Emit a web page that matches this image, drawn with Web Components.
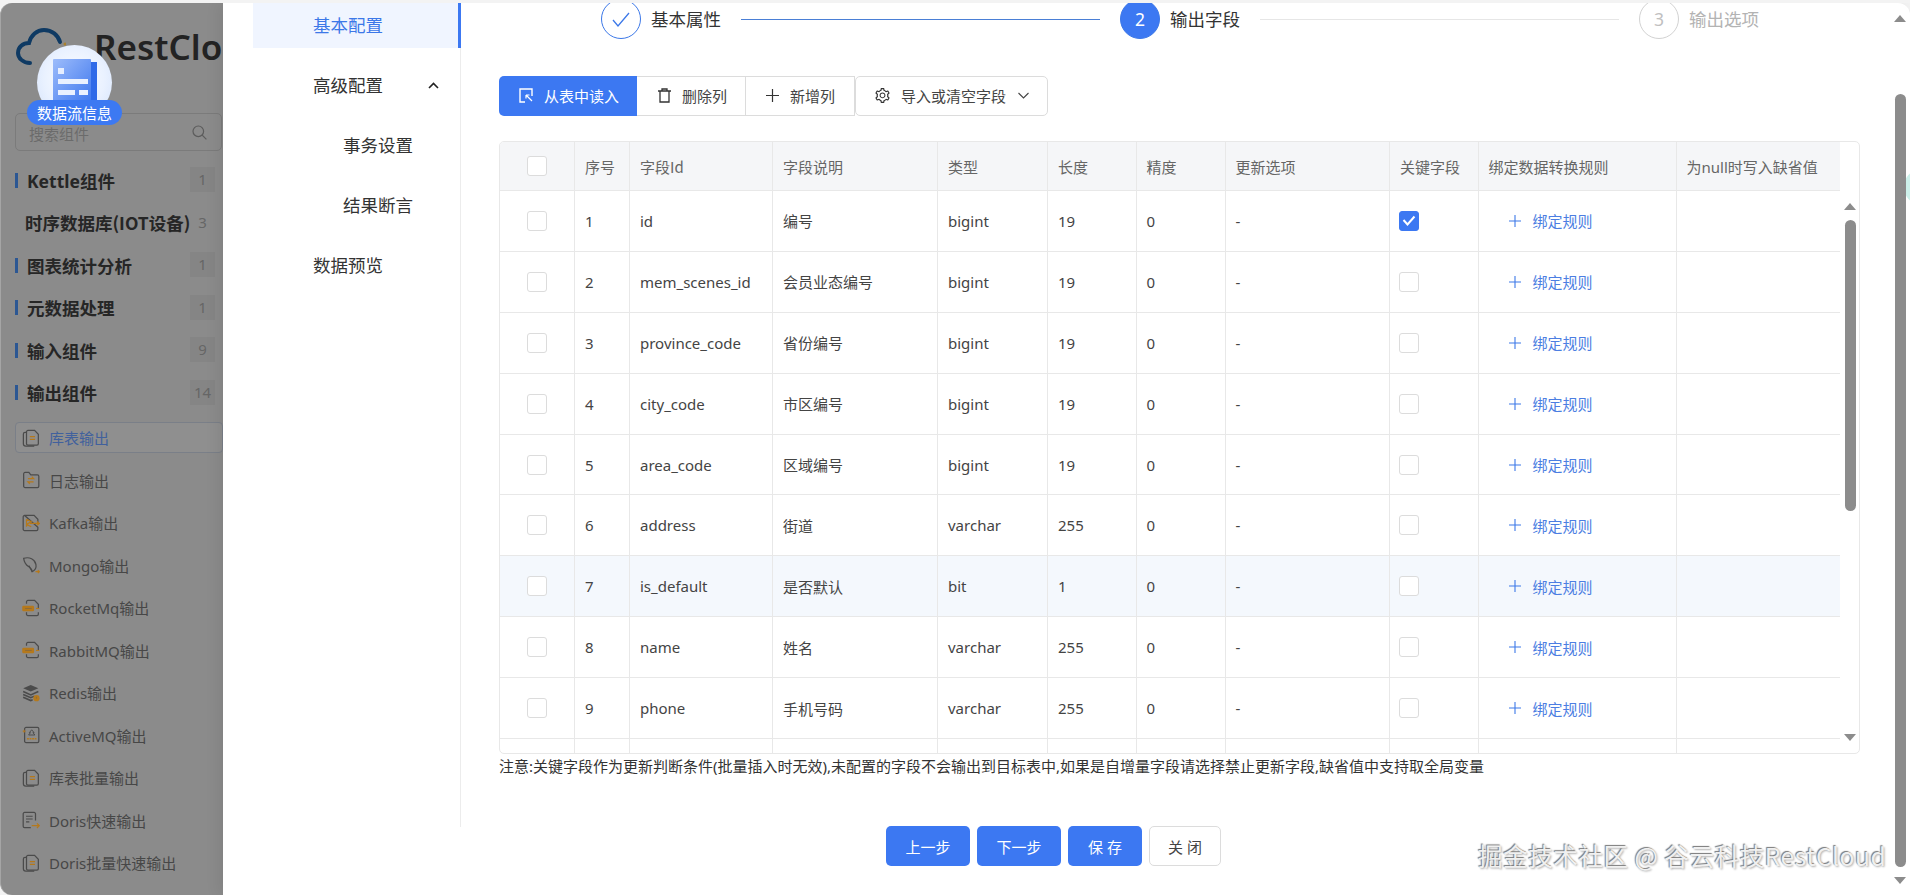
<!DOCTYPE html>
<html lang="zh">
<head>
<meta charset="utf-8">
<title>RestCloud</title>
<style>
  html, body { margin: 0; height: 895px; overflow: hidden; background: #f3f3f3; }
  body { font-family: "Noto Sans", "Noto Sans CJK SC", sans-serif; }
</style>
</head>
<body>
<rc-app>
  <rc-sidebar slot="side">
    <rc-group count="1" bar>Kettle组件</rc-group>
    <rc-group count="3" plain>时序数据库(IOT设备)</rc-group>
    <rc-group count="1" bar>图表统计分析</rc-group>
    <rc-group count="1" bar>元数据处理</rc-group>
    <rc-group count="9" bar>输入组件</rc-group>
    <rc-group count="14" bar>输出组件</rc-group>
    <rc-item icon="stack" active>库表输出</rc-item>
    <rc-item icon="folder">日志输出</rc-item>
    <rc-item icon="kafka">Kafka输出</rc-item>
    <rc-item icon="leaf">Mongo输出</rc-item>
    <rc-item icon="rocket">RocketMq输出</rc-item>
    <rc-item icon="rocket">RabbitMQ输出</rc-item>
    <rc-item icon="redis">Redis输出</rc-item>
    <rc-item icon="active">ActiveMQ输出</rc-item>
    <rc-item icon="stack">库表批量输出</rc-item>
    <rc-item icon="doc">Doris快速输出</rc-item>
    <rc-item icon="stack">Doris批量快速输出</rc-item>
  </rc-sidebar>
  <rc-flow-node slot="side"></rc-flow-node>
  <rc-config-menu slot="panel"></rc-config-menu>
  <rc-main slot="panel">
    <rc-steps></rc-steps>
    <rc-toolbar></rc-toolbar>
    <rc-field-table></rc-field-table>
    <rc-form-footer></rc-form-footer>
  </rc-main>
</rc-app>

<script>
const define = (name, html) => {
  customElements.define(name, class extends HTMLElement {
    constructor() {
      super();
      this.attachShadow({ mode: "open" });
      this.shadowRoot.innerHTML = typeof html === "function" ? html(this) : html;
    }
  });
};

define("rc-app", `
  <style>
    :host { display: flex; height: 892px; margin-top: 3px; position: relative; overflow: hidden; }
    #side { display: block; width: 223px; flex: none; position: relative; }
    #panel {
      flex: 1; display: flex; background: #fff; position: relative; min-width: 0;
      border-radius: 0 12px 0 0; box-shadow: -5px 0 14px rgba(0, 0, 0, .07);
    }
    .mark {
      position: absolute; left: 1478px; top: 834px; white-space: nowrap; letter-spacing: .5px;
      font: 24.6px "Noto Sans CJK SC", "Noto Sans", sans-serif; color: #f0f0f0;
      text-shadow: -1px -1px 1px #777, 1px 1px 2px #b0b0b0;
    }
    .bar { position: absolute; background: #8c8c8c; }
    .arrow { position: absolute; width: 0; height: 0; border-left: 6.5px solid transparent; border-right: 6.5px solid transparent; }
    .teal { position: absolute; left: 1904px; top: 167px; width: 30px; height: 34px; border-radius: 50%; background: #cdf1eb; }
  </style>
  <slot id="side" name="side"></slot>
  <div id="panel"><slot name="panel"></slot></div>
  <div class="teal"></div>
  <div class="arrow" style="left:1894px;top:12px;border-bottom:7px solid #8c8c8c"></div>
  <div class="bar" style="left:1895px;top:91px;width:11px;height:773px;border-radius:6px"></div>
  <div class="arrow" style="left:1894px;top:874px;border-top:7px solid #8c8c8c"></div>
  <div class="arrow" style="left:1844px;top:200px;border-bottom:7px solid #8c8c8c"></div>
  <div class="bar" style="left:1845px;top:217px;width:11px;height:291px;border-radius:6px"></div>
  <div class="arrow" style="left:1844px;top:731px;border-top:7px solid #8c8c8c"></div>
  <div class="mark">掘金技术社区 @ 谷云科技RestCloud</div>
`);

define("rc-sidebar", `
  <style>
    :host {
      display: block; height: 892px; background: #8b8b8b; overflow: hidden; box-sizing: border-box;
      border-radius: 12px 0 0 12px; border-left: 1px solid #a5a5a5; padding: 25px 0 0 14px;
    }
    .logo { display: flex; align-items: center; gap: 4px; height: 37px; margin-left: 1px; white-space: nowrap; }
    .logo svg { flex: none; }
    .logo b { font: 600 35px/37px "Noto Sans", sans-serif; color: #232323; margin-left: 24px; }
    .search {
      box-sizing: border-box; display: flex; align-items: center; justify-content: space-between;
      width: 207px; height: 38px; margin: 48px 0 8px; padding: 0 14px 0 13px;
      border: 1px solid #7b7b7b; border-radius: 5px; color: #6b6b6b; font-size: 15px;
    }
    .search span { padding-top: 3px; }
    .search svg { flex: none; }
    .list { display: block; }
  </style>
  <div class="logo">
    <svg width="50" height="38" viewBox="0 0 50 38" fill="none" stroke="#0f3a63" stroke-width="4" stroke-linecap="round">
      <path d="M14 35C7 35 2 30 2 25c0-6 5-10 11-10C15 7 21 2 28 2c8 0 14 5 16 12"/>
      <circle cx="49" cy="16" r="1.5" fill="#a9812e" stroke="none"/>
    </svg>
    <b>RestCloud</b>
  </div>
  <div class="search">
    <span>搜索组件</span>
    <svg width="15" height="15" viewBox="0 0 15 15" fill="none" stroke="#5c5c5c" stroke-width="1.2"><circle cx="6.3" cy="6.3" r="5.3"/><path d="M10.2 10.2l4.2 4.2"/></svg>
  </div>
  <slot class="list"></slot>
`);

define("rc-flow-node", `
  <style>
    :host {
      position: absolute; left: 27px; top: 42px; width: 95px; display: flex; flex-direction: column; align-items: center;
    }
    .disc {
      width: 75px; height: 75px; border-radius: 50%; overflow: hidden; display: flex; justify-content: center; align-items: flex-start;
      background: radial-gradient(circle at 50% 45%, #fff 0%, #e9f1ff 55%, #cfdffb 100%);
    }
    .pill {
      margin-top: -20px; height: 25px; width: 95px; border-radius: 13px; background: #3c79f2; color: #fff; position: relative;
      font: 15px/25px "Noto Sans CJK SC", sans-serif; text-align: center;
    }
  </style>
  <div class="disc">
    <svg width="46" height="48" viewBox="0 0 46 48" style="margin-top:14px">
      <defs><linearGradient id="g" x1="0" y1="0" x2="1" y2="1"><stop offset="0" stop-color="#9dbcfb"/><stop offset="1" stop-color="#3f78ee"/></linearGradient></defs>
      <rect x="1" y="0" width="38" height="44" rx="1" fill="url(#g)"/>
      <rect x="39" y="3" width="6" height="41" fill="#2f6ae8"/>
      <rect x="6" y="9" width="6" height="6" fill="#e6eeff"/>
      <rect x="6" y="20" width="30" height="5" fill="#eaf1ff"/>
      <rect x="6" y="31" width="17" height="5" fill="#eaf1ff"/>
      <rect x="27" y="31" width="9" height="5" fill="#eaf1ff"/>
    </svg>
  </div>
  <div class="pill">数据流信息</div>
`);

define("rc-group", (el) => `
  <style>
    :host { display: flex; align-items: center; height: 42.5px; position: relative; white-space: nowrap; }
    .tick { width: 2.5px; height: 15px; background: #2c5793; margin-right: 9.5px; flex: none; visibility: ${el.hasAttribute("bar") ? "visible" : "hidden"}; }
    .name { font-size: 17.5px; font-weight: 700; color: #262626; ${el.hasAttribute("plain") ? 'margin-left:-2px;font-family:"Noto Sans CJK SC",sans-serif;' : ""} }
    .count {
      position: absolute; left: 175px; top: 8px; width: 25px; height: 25px; line-height: 25px; text-align: center;
      font-size: 15px; color: #666; background: ${el.hasAttribute("plain") ? "transparent" : "#858585"};
    }
  </style>
  <span class="tick"></span><span class="name"><slot></slot></span>
  <span class="count">${el.getAttribute("count")}</span>
`);

const ORANGE = "#b5791c";
const DARK = "#4b4b4b";
const ITEM_ICONS = {
  stack: `<path d="M6 1.500h7l4 4v10a1.500 1.500 0 0 1-1.500 1.500H6A1.500 1.500 0 0 1 4.500 15.500V3A1.500 1.500 0 0 1 6 1.500z" fill="none" stroke="${DARK}" stroke-width="1.300"/><path d="M4.500 3.500H3A1.800 1.800 0 0 0 1.200 5.300v10.200A2.500 2.500 0 0 0 3.700 18h9" fill="none" stroke="${DARK}" stroke-width="1.300"/><path d="M8 8h5.500M8 11h5.500" stroke="${ORANGE}" stroke-width="1.400"/>`,
  folder: `<path d="M1.500 3A1.500 1.500 0 0 1 3 1.500h4l2 2.500h7A1.500 1.500 0 0 1 17.500 5.500v10.500A1.500 1.500 0 0 1 16 17.500H3A1.500 1.500 0 0 1 1.500 16z" fill="none" stroke="${DARK}" stroke-width="1.300"/><path d="M6 8h6l-2-2M12 11.500H6l2 2" fill="none" stroke="${ORANGE}" stroke-width="1.300"/>`,
  kafka: `<path d="M2.500 1.500h10l4 4v4M16.500 14v2A1.500 1.500 0 0 1 15 17.500H2.500A1.500 1.500 0 0 1 1 16V3A1.500 1.500 0 0 1 2.500 1.500z" fill="none" stroke="${DARK}" stroke-width="1.300"/><path d="M4.500 5.500l5 2.500-5 3M4.500 5.500v8M4.500 11l5 2.500M8 10h10M15.500 8l2.500 2-2.500 2" fill="none" stroke="${ORANGE}" stroke-width="1.300"/>`,
  leaf: `<path d="M1.500 2.500c6-2 12 1 13 6.500.5 3-1 6-4 7.500-.5-3-2-4-4-5.500C3.500 9 2 6 1.500 2.500z" fill="none" stroke="${DARK}" stroke-width="1.300"/><path d="M7 10l3.500 6.500" stroke="${DARK}" stroke-width="1.100"/><path d="M14 16.500h4M16.500 15l1.500 1.500-1.500 1.500" fill="none" stroke="${ORANGE}" stroke-width="1.200"/>`,
  rocket: `<path d="M4.500 5V3A1.500 1.500 0 0 1 6 1.500h7l4 4v4M17 14v2a1.500 1.500 0 0 1-1.500 1.500H6A1.500 1.500 0 0 1 4.500 16v-2" fill="none" stroke="${DARK}" stroke-width="1.300"/><rect x="0" y="7" width="12.500" height="6" rx="1.500" fill="${ORANGE}"/><path d="M3 10h7" stroke="#8b6a3a" stroke-width="1"/><path d="M14.500 10H18" stroke="${ORANGE}" stroke-width="1.200"/>`,
  redis: `<path d="M1 4.500L9 1l8 3.500L9 8z" fill="${DARK}"/><path d="M1 8l8 3.500L17 8M1 11l8 3.500 4-1.700M1 14l8 3.500 2-.8" fill="none" stroke="${DARK}" stroke-width="1.700"/><circle cx="15" cy="15" r="3.300" fill="${ORANGE}"/><path d="M15 13.500v2" stroke="#8b6a3a" stroke-width="1"/>`,
  active: `<rect x="2.500" y="1.500" width="15" height="16" rx="1.500" fill="none" stroke="${DARK}" stroke-width="1.300"/><path d="M10 4l2.500 3h-1.200l2 2.500H6.700l2-2.500H7.500z" fill="none" stroke="${DARK}" stroke-width="1"/><path d="M5 13.500h10" stroke="${ORANGE}" stroke-width="1.500" stroke-dasharray="2 .7"/><path d="M.5 5.500h3M2 4v3" stroke="${ORANGE}" stroke-width="1"/>`,
  doc: `<path d="M14 10V3A1.500 1.500 0 0 0 12.500 1.500H2.500A1.500 1.500 0 0 0 1 3v13a1.500 1.500 0 0 0 1.500 1.500H9" fill="none" stroke="${DARK}" stroke-width="1.300"/><path d="M4 5.500h7M4 8.500h7M4 11.500h3.500" stroke="${DARK}" stroke-width="1.100"/><path d="M10 15.500h8M15.500 13l2.500 2.500-2.500 2.500" fill="none" stroke="${ORANGE}" stroke-width="1.300"/>`
};

define("rc-item", (el) => {
  const active = el.hasAttribute("active");
  return `
  <style>
    :host { display: flex; align-items: center; height: 42.500px; white-space: nowrap; position: relative; ${active ? "margin-top:2.500px;" : ""} }
    .box { display: flex; align-items: center; height: 31px; box-sizing: border-box; width: 215px; padding-left: 7px; ${active ? "border:1px solid #7a7f88;border-radius:4px;background:#8f8f8f;padding-left:6px;" : ""} }
    svg { flex: none; margin-right: 9px; }
    span { font-size: 15px; color: ${active ? "#41619d" : "#474747"}; }
  </style>
  <div class="box">
    <svg width="18" height="18" viewBox="0 0 18.500 19">${ITEM_ICONS[el.getAttribute("icon")]}</svg>
    <span><slot></slot></span>
  </div>`;
});

define("rc-config-menu", `
  <style>
    :host {
      display: block; flex: none; width: 238px; height: 824px; box-sizing: border-box; border-right: 1px solid #ececec;
      padding-left: 30px; font-size: 17.500px; color: #333;
    }
    .row { display: flex; align-items: center; box-sizing: border-box; height: 45px; margin-bottom: 15px; padding: 0 0 2px 60px; position: relative; }
    .row.on { background: #f0f5ff; color: #3c78e8; margin-right: -1px; border-right: 3px solid #3c78f2; }
    .sub { padding-left: 90px; }
    svg { position: absolute; left: 175px; top: 19px; }
  </style>
  <div class="row on">基本配置</div>
  <div class="row">高级配置<svg width="11" height="7" viewBox="0 0 11 7" fill="none" stroke="#222" stroke-width="1.600"><path d="M1 6l4.500-4.500L10 6"/></svg></div>
  <div class="row sub">事务设置</div>
  <div class="row sub">结果断言</div>
  <div class="row">数据预览</div>
`);

define("rc-main", `
  <style>
    :host { display: block; flex: 1; min-width: 0; padding: 0 50px 0 38px; overflow: hidden; }
  </style>
  <slot></slot>
`);

define("rc-steps", `
  <style>
    :host { display: flex; height: 40px; margin: -4px 0 37px 102px; color: #333; font-size: 17.500px; }
    .step { display: flex; align-items: center; width: 519px; flex: none; box-sizing: border-box; padding-bottom: 2px; }
    .step:last-child { width: auto; }
    .dot { width: 40px; height: 40px; box-sizing: border-box; border-radius: 50%; flex: none; display: flex; align-items: center; justify-content: center; border: 1px solid #3c78e8; margin: 0 10px -2px 0; font-size: 17.500px; }
    .line { flex: 1; height: 1px; margin: 2px 20px 0; background: #4a7fd6; }
    .todo { color: #b3b3b3; }
    .todo .dot { border-color: #d2d2d2; color: #c0c0c0; }
  </style>
  <div class="step"><div class="dot"><svg width="18" height="15" viewBox="0 0 18 15" fill="none" stroke="#3c78e8" stroke-width="1.300"><path d="M1 8l5 6L17 1"/></svg></div>基本属性<div class="line"></div></div>
  <div class="step"><div class="dot" style="background:#3c78f2;color:#fff">2</div>输出字段<div class="line" style="background:#e6e6e6"></div></div>
  <div class="step todo"><div class="dot">3</div>输出选项</div>
`);

define("rc-toolbar", `
  <style>
    :host { display: flex; height: 40px; margin-bottom: 25px; font-size: 15px; color: #444; width: max-content; }
    .btn { display: flex; align-items: center; box-sizing: border-box; height: 40px; border: 1px solid #dcdcdc; border-left: none; white-space: nowrap; padding-bottom: 2px; }
    .btn svg { flex: none; }
    .read { width: 138px; background: #3c78f2; border: none; color: #fff; padding-left: 20px; gap: 11px; border-radius: 5px 0 0 5px; }
    .del { width: 109px; padding-left: 21px; gap: 11px; }
    .add { width: 109px; padding-left: 20px; gap: 11px; }
    .imp { width: 193px; padding-left: 19px; border-left: 1px solid #dcdcdc; border-radius: 5px; gap: 11px; }
  </style>
  <div class="btn read"><svg width="14" height="15" viewBox="0 0 14 15" fill="none" stroke="#fff" stroke-width="1.400"><path d="M6 14H1V1h12v7"/><path d="M7 7l6 6M7 7h3.500M7 7v3.500" stroke-width="1.200"/></svg>从表中读入</div>
  <div class="btn del"><svg width="13" height="15" viewBox="0 0 13 15" fill="none" stroke="#333" stroke-width="1.300"><path d="M0 3h13M4 3V1h5v2M2 3v11h9V3"/></svg>删除列</div>
  <div class="btn add"><svg width="13" height="13" viewBox="0 0 13 13" stroke="#333" stroke-width="1.200"><path d="M6.500 0v13M0 6.500h13"/></svg>新增列</div>
  <div class="btn imp"><svg width="15" height="15" viewBox="64 64 896 896" fill="#333"><path d="M924.8 625.7l-65.5-56c3.1-19 4.7-38.4 4.7-57.8s-1.6-38.800-4.700-57.800l65.500-56a32.030 32.030 0 0 0 9.300-35.200l-.9-2.600a443.740 443.740 0 0 0-79.700-137.900l-1.800-2.100a32.120 32.120 0 0 0-35.100-9.500l-81.300 28.900c-30-24.600-63.500-44-99.700-57.600l-15.700-85a32.050 32.050 0 0 0-25.800-25.700l-2.700-.5c-52.100-9.400-106.900-9.400-159 0l-2.700.5a32.050 32.050 0 0 0-25.800 25.700l-15.800 85.400a351.860 351.860 0 0 0-99 57.400l-81.900-29.100a32 32 0 0 0-35.100 9.500l-1.800 2.100a446.020 446.020 0 0 0-79.700 137.900l-.9 2.600c-4.500 12.500-.8 26.500 9.300 35.200l66.300 56.600c-3.100 18.800-4.600 38-4.600 57.100 0 19.200 1.500 38.400 4.600 57.100L99 625.500a32.030 32.030 0 0 0-9.300 35.200l.9 2.600c18.100 50.400 44.900 96.900 79.700 137.900l1.800 2.100a32.120 32.120 0 0 0 35.100 9.500l81.900-29.100c29.800 24.500 63.100 43.900 99 57.400l15.800 85.400a32.050 32.050 0 0 0 25.800 25.700l2.700.5a449.400 449.400 0 0 0 159 0l2.700-.5a32.050 32.050 0 0 0 25.800-25.700l15.700-85a350 350 0 0 0 99.700-57.600l81.300 28.900a32 32 0 0 0 35.100-9.500l1.800-2.100c34.800-41.100 61.600-87.500 79.700-137.900l.9-2.600c4.500-12.300.8-26.300-9.300-35zM788.300 465.900c2.500 15.100 3.800 30.600 3.800 46.100s-1.300 31-3.800 46.100l-6.600 40.100 74.700 63.900a370.030 370.030 0 0 1-42.600 73.600L721 702.800l-31.400 25.800c-23.900 19.600-50.500 35-79.300 45.800l-38.100 14.300-17.900 97a377.500 377.500 0 0 1-85 0l-17.900-97.200-37.800-14.500c-28.500-10.800-55-26.200-78.700-45.700l-31.400-25.900-93.400 33.200c-17-22.900-31.200-47.600-42.600-73.600l75.500-64.500-6.500-40c-2.400-14.900-3.700-30.300-3.700-45.500 0-15.300 1.200-30.600 3.700-45.500l6.500-40-75.500-64.500c11.300-26.100 25.600-50.700 42.600-73.600l93.400 33.200 31.400-25.900c23.700-19.500 50.200-34.900 78.700-45.700l37.900-14.300 17.900-97.200c28.100-3.200 56.800-3.200 85 0l17.900 97 38.100 14.300c28.700 10.800 55.400 26.200 79.300 45.800l31.400 25.800 92.800-32.900c17 22.900 31.200 47.600 42.600 73.600L781.800 426l6.500 39.900zM512 326c-97.200 0-176 78.800-176 176s78.800 176 176 176 176-78.800 176-176-78.800-176-176-176zm79.200 255.200A111.600 111.600 0 0 1 512 614c-29.900 0-58-11.700-79.200-32.800A111.600 111.600 0 0 1 400 502c0-29.900 11.700-58 32.800-79.200C454 401.600 482.100 390 512 390c29.900 0 58 11.600 79.200 32.800A111.600 111.600 0 0 1 624 502c0 29.900-11.700 58-32.800 79.200z"/></svg>导入或清空字段<svg width="11" height="7" viewBox="0 0 11 7" fill="none" stroke="#444" stroke-width="1.100" style="margin-left:1px"><path d="M.5 1l5 5 5-5"/></svg></div>
`);

const FIELDS = [
  ["id", "编号", "bigint", "19", true],
  ["mem_scenes_id", "会员业态编号", "bigint", "19"],
  ["province_code", "省份编号", "bigint", "19"],
  ["city_code", "市区编号", "bigint", "19"],
  ["area_code", "区域编号", "bigint", "19"],
  ["address", "街道", "varchar", "255"],
  ["is_default", "是否默认", "bit", "1"],
  ["name", "姓名", "varchar", "255"],
  ["phone", "手机号码", "varchar", "255"]
];
const CHECK_ON = `<svg width="14" height="11" viewBox="0 0 14 11" fill="none" stroke="#fff" stroke-width="2"><path d="M1.500 5l4 4.500 7-8"/></svg>`;
const fieldRow = (f, i) => `
  <div class="row${i === 6 ? " hover" : ""}">
    <div class="c mid"><i class="box"></i></div>
    <div class="c">${i + 1}</div><div class="c">${f[0]}</div><div class="c">${f[1]}</div><div class="c">${f[2]}</div>
    <div class="c">${f[3]}</div><div class="c">0</div><div class="c">-</div>
    <div class="c"><i class="box${f[4] ? " on" : ""}" style="margin-left:-1px">${f[4] ? CHECK_ON : ""}</i></div>
    <div class="c rule"><svg width="12" height="12" viewBox="0 0 12 12" stroke="#3c78e8" stroke-width="1.100"><path d="M6 0v12M0 6h12"/></svg>绑定规则</div>
    <div class="c last"></div>
  </div>`;

define("rc-field-table", `
  <style>
    :host {
      display: block; box-sizing: border-box; height: 613px; border: 1px solid #e8e8e8; border-radius: 5px; overflow: hidden;
      padding-right: 19px; font-size: 15px; color: #444;
    }
    .row { display: grid; grid-template-columns: 75px 55px 143px 165px 110px 88.500px 89px 164.500px 88.500px 198px 163.500px; height: 60.900px; }
    .head { height: 49px; background: #f5f6f8; color: #666; }
    .hover { background: #f4f8fd; }
    .c { display: flex; align-items: center; box-sizing: border-box; padding-left: 10px; border-right: 1px solid #e8e8e8; border-bottom: 1px solid #e8e8e8; white-space: nowrap; overflow: hidden; }
    .mid { justify-content: center; padding-left: 0; }
    .last { border-right: none; }
    .box { display: flex; align-items: center; justify-content: center; width: 20px; height: 20px; box-sizing: border-box; border: 1px solid #dcdcdc; border-radius: 3px; background: #fff; }
    .box.on { background: #3c78f2; border-color: #3c78f2; }
    .rule { color: #4c7ee2; padding-left: 30px; gap: 12px; }
    .cjk { font-family: "Noto Sans CJK SC", sans-serif; }
  </style>
  <div class="row head">
    <div class="c mid"><i class="box"></i></div>
    <div class="c">序号</div><div class="c cjk">字段Id</div><div class="c">字段说明</div><div class="c">类型</div><div class="c">长度</div>
    <div class="c">精度</div><div class="c">更新选项</div><div class="c">关键字段</div><div class="c">绑定数据转换规则</div><div class="c last">为null时写入缺省值</div>
  </div>
  ${FIELDS.map(fieldRow).join("")}
  <div class="row">${'<div class="c"></div>'.repeat(10)}<div class="c last"></div></div>
`);

define("rc-form-footer", `
  <style>
    :host { display: block; font-size: 15px; color: #333; }
    .note { height: 24px; line-height: 24px; margin-top: 0; white-space: nowrap; }
    .btns { display: flex; gap: 7px; margin: 48px 0 0 387px; }
    .b { display: flex; align-items: center; justify-content: center; height: 40px; box-sizing: border-box; border-radius: 5px; background: #3c78f2; color: #fff; }
    .w { background: #fff; color: #444; border: 1px solid #dcdcdc; }
  </style>
  <div class="note">注意:关键字段作为更新判断条件(批量插入时无效),未配置的字段不会输出到目标表中,如果是自增量字段请选择禁止更新字段,缺省值中支持取全局变量</div>
  <div class="btns">
    <div class="b" style="width:84px">上一步</div>
    <div class="b" style="width:84px">下一步</div>
    <div class="b" style="width:74px">保 存</div>
    <div class="b w" style="width:72px">关 闭</div>
  </div>
`);
</script>
</body>
</html>
